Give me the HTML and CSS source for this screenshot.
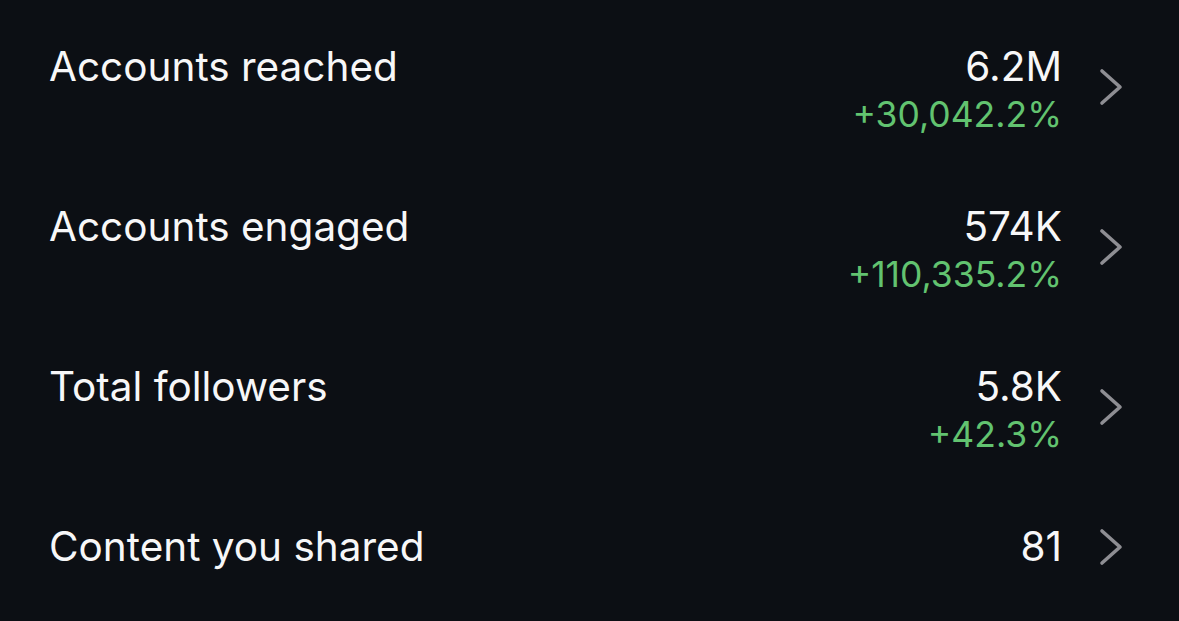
FILE: index.html
```html
<!DOCTYPE html>
<html>
<head>
<meta charset="utf-8">
<link rel="stylesheet" href="styles.css">
</head>
<body>
<div class="list">
  <div class="row">
    <div class="label">Accounts reached</div>
    <div class="right">
      <div class="values"><div class="value">6.2M</div><div class="delta">+30,042.2%</div></div>
      <svg class="chev" viewBox="0 0 24 38"><polyline points="3,3 21,19 3,35"/></svg>
    </div>
  </div>
  <div class="row">
    <div class="label">Accounts engaged</div>
    <div class="right">
      <div class="values"><div class="value">574K</div><div class="delta">+110,335.2%</div></div>
      <svg class="chev" viewBox="0 0 24 38"><polyline points="3,3 21,19 3,35"/></svg>
    </div>
  </div>
  <div class="row">
    <div class="label">Total followers</div>
    <div class="right">
      <div class="values"><div class="value">5.8K</div><div class="delta">+42.3%</div></div>
      <svg class="chev" viewBox="0 0 24 38"><polyline points="3,3 21,19 3,35"/></svg>
    </div>
  </div>
  <div class="row single">
    <div class="label">Content you shared</div>
    <div class="right">
      <div class="values"><div class="value">81</div></div>
      <svg class="chev" viewBox="0 0 24 38"><polyline points="3,3 21,19 3,35"/></svg>
    </div>
  </div>
</div>
</body>
</html>
```
FILE: styles.css
```css
html, body {
  margin: 0;
  padding: 0;
  background: #0c0f14;
  height: 100%;
}
body {
  font-family: Inter, "Noto Sans", sans-serif;
  color: #f7f7f8;
  overflow: hidden;
}
.list {
  display: flex;
  flex-direction: column;
  gap: 65px;
  padding: 43px 56px 0 49px;
}
.row {
  display: flex;
  justify-content: space-between;
  align-items: flex-start;
  height: 95px;
}
.row.single {
  height: 48px;
}
.label {
  font-size: 40.5px;
  line-height: 48px;
  font-weight: 400;
}
.right {
  display: flex;
  align-items: center;
  gap: 37px;
  height: 100%;
}
.values {
  display: flex;
  flex-direction: column;
  align-items: flex-end;
}
.value {
  font-size: 40.5px;
  line-height: 48px;
}
.delta {
  font-size: 35.5px;
  line-height: 47px;
  color: #62c370;
}
.chev {
  width: 24px;
  height: 38px;
  margin-bottom: 7px;
  fill: none;
  stroke: #8e8e93;
  stroke-width: 3.6;
  stroke-linecap: round;
  stroke-linejoin: round;
}
.single .chev {
  margin-bottom: 0;
}
```
